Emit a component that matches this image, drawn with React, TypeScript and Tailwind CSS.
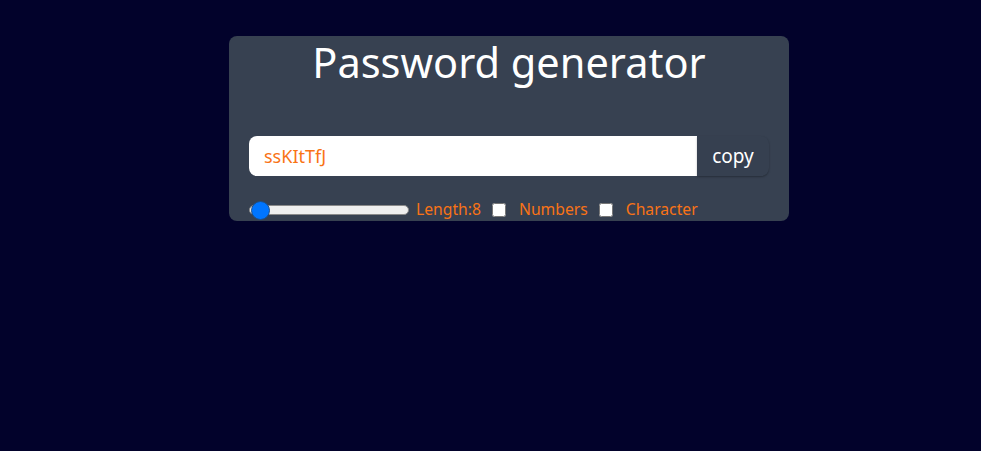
import React from "react";

export default function App() {
  return (
    <div className="w-full h-[451px] bg-[#02022b] overflow-hidden" style={{ fontFamily: '"Noto Sans", "Open Sans", sans-serif' }}>
      <div className="ml-[229px] mt-[36px] w-[560px] h-[185px] rounded-lg bg-[#374151] px-5 flex flex-col">
        <h1 className="text-white text-center text-[41.5px] leading-[56px] mt-0 h-[100px] shrink-0 pt-[0px]" style={{ marginTop: 0 }}>
          <span className="block -translate-y-[2px]">Password generator</span>
        </h1>
        <div className="flex h-10 shrink-0 rounded-lg">
          <input
            readOnly
            value="ssKItTfJ"
            className="flex-1 bg-white rounded-l-lg outline-none px-[15px] text-[18px] text-[#f97316]"
          />
          <button className="w-[72px] bg-[#364050] rounded-r-lg text-white text-[19px] shadow-[0_1px_2px_rgba(0,0,0,0.3)]">copy</button>
        </div>
        <div className="flex items-center mt-[24px] text-[15.7px] text-[#f97316] h-[20px] shrink-0">
          <input
            type="range"
            min={6}
            max={100}
            defaultValue={8}
            className="w-[160px] h-[10px] appearance-none bg-[#efefef] border border-[#8a8a8a] rounded-full cursor-pointer [&::-webkit-slider-thumb]:appearance-none [&::-webkit-slider-thumb]:w-[19px] [&::-webkit-slider-thumb]:h-[19px] [&::-webkit-slider-thumb]:rounded-full [&::-webkit-slider-thumb]:bg-[#0075ff] [&::-webkit-slider-thumb]:border [&::-webkit-slider-thumb]:border-[#1c4f8a] [&::-webkit-slider-thumb]:ml-[-2px]"
          />
          <label className="ml-[7px]">Length:8</label>
          <input type="checkbox" className="ml-[11px] w-[14px] h-[14px]" />
          <label className="ml-[13px]">Numbers</label>
          <input type="checkbox" className="ml-[11px] w-[14px] h-[14px]" />
          <label className="ml-[13px]">Character</label>
        </div>
      </div>
    </div>
  );
}
